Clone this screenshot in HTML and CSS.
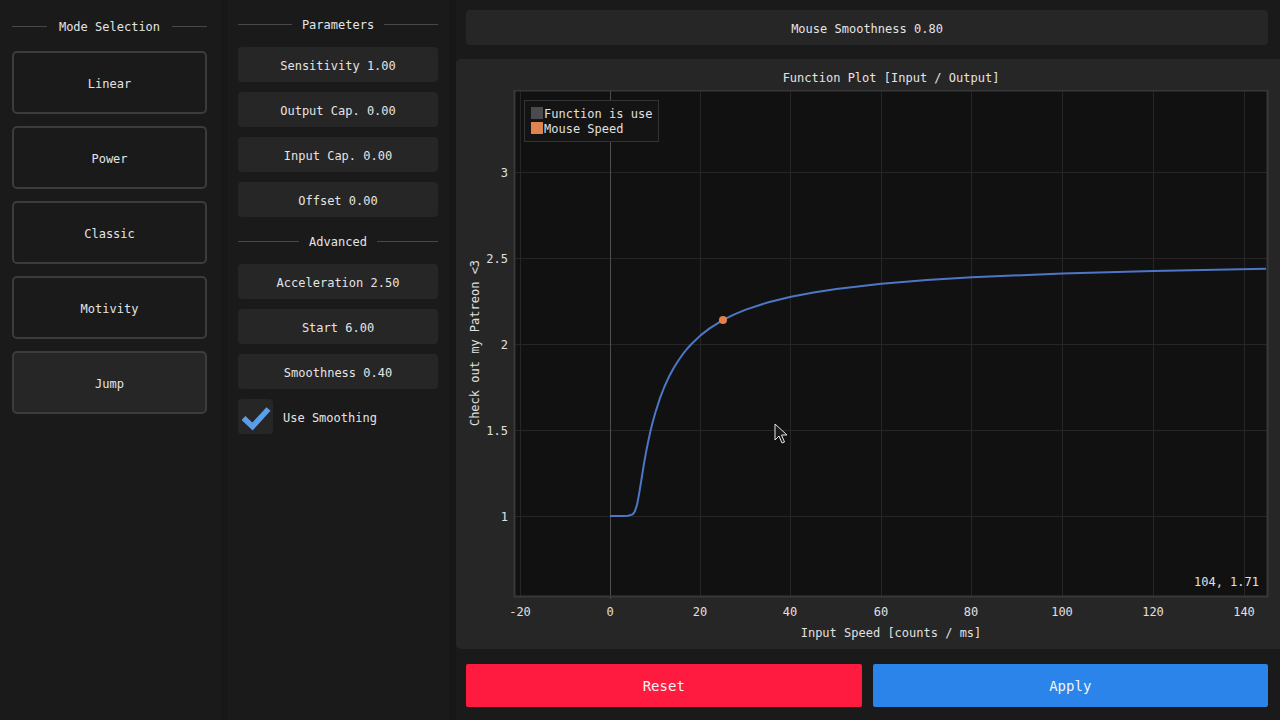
FILE: index.html
```html
<!DOCTYPE html>
<html>
<head>
<meta charset="utf-8">
<link rel="stylesheet" href="styles.css">
</head>
<body>
<div class="app">
  <div class="col-modes">
    <div class="header header-modes"><span class="rule"></span><span class="htext">Mode Selection</span><span class="rule"></span></div>
    <div class="mode-btn">Linear</div>
    <div class="mode-btn">Power</div>
    <div class="mode-btn">Classic</div>
    <div class="mode-btn">Motivity</div>
    <div class="mode-btn selected">Jump</div>
  </div>
  <div class="sep"></div>
  <div class="col-params">
    <div class="header"><span class="rule"></span><span class="htext">Parameters</span><span class="rule"></span></div>
    <div class="param-list">
      <div class="param-btn">Sensitivity 1.00</div>
      <div class="param-btn">Output Cap. 0.00</div>
      <div class="param-btn">Input Cap. 0.00</div>
      <div class="param-btn">Offset 0.00</div>
    </div>
    <div class="header header-adv"><span class="rule"></span><span class="htext">Advanced</span><span class="rule"></span></div>
    <div class="param-list">
      <div class="param-btn">Acceleration 2.50</div>
      <div class="param-btn">Start 6.00</div>
      <div class="param-btn">Smoothness 0.40</div>
      <div class="check-row">
        <div class="checkbox">
          <svg width="35" height="35" viewBox="0 0 35 35"><path d="M5.5 19 L14.5 27.5 L30.5 10" fill="none" stroke="#5a9ee9" stroke-width="5.5" stroke-linecap="butt" stroke-linejoin="miter"/></svg>
        </div>
        <span class="check-label">Use Smoothing</span>
      </div>
    </div>
  </div>
  <div class="sep sep2"></div>
  <div class="col-main">
    <div class="top-bar">Mouse Smoothness 0.80</div>
    <div class="plot-panel">
      <div class="plot-title">Function Plot [Input / Output]</div>
      <svg class="plot-svg" width="824" height="559" viewBox="456 90 824 559">
        <rect x="515" y="91" width="752" height="505" fill="#111111"/>
        <g stroke="#262626" stroke-width="1">
          <line x1="520.5" y1="91" x2="520.5" y2="599"/>
          <line x1="700.5" y1="91" x2="700.5" y2="599"/>
          <line x1="790.5" y1="91" x2="790.5" y2="599"/>
          <line x1="881.5" y1="91" x2="881.5" y2="599"/>
          <line x1="971.5" y1="91" x2="971.5" y2="599"/>
          <line x1="1062.5" y1="91" x2="1062.5" y2="599"/>
          <line x1="1153.5" y1="91" x2="1153.5" y2="599"/>
          <line x1="1244.5" y1="91" x2="1244.5" y2="599"/>
          <line x1="510" y1="172.5" x2="1267" y2="172.5"/>
          <line x1="510" y1="258.5" x2="1267" y2="258.5"/>
          <line x1="510" y1="344.5" x2="1267" y2="344.5"/>
          <line x1="510" y1="430.5" x2="1267" y2="430.5"/>
          <line x1="510" y1="516.5" x2="1267" y2="516.5"/>
        </g>
        <line x1="610.5" y1="91" x2="610.5" y2="599" stroke="#4e4e50" stroke-width="1"/>
        <rect x="514.5" y="90.5" width="753" height="506" fill="none" stroke="#383838" stroke-width="2"/>
        <g class="tick">
          <text x="520" y="616" text-anchor="middle">-20</text>
          <text x="610" y="616" text-anchor="middle">0</text>
          <text x="700" y="616" text-anchor="middle">20</text>
          <text x="790" y="616" text-anchor="middle">40</text>
          <text x="881" y="616" text-anchor="middle">60</text>
          <text x="971" y="616" text-anchor="middle">80</text>
          <text x="1062" y="616" text-anchor="middle">100</text>
          <text x="1153" y="616" text-anchor="middle">120</text>
          <text x="1244" y="616" text-anchor="middle">140</text>
          <text x="508" y="177" text-anchor="end">3</text>
          <text x="508" y="263" text-anchor="end">2.5</text>
          <text x="508" y="349" text-anchor="end">2</text>
          <text x="508" y="435" text-anchor="end">1.5</text>
          <text x="508" y="521" text-anchor="end">1</text>
          <text x="891" y="637" text-anchor="middle">Input Speed [counts / ms]</text>
          <text x="0" y="0" text-anchor="middle" transform="translate(478.5 343) rotate(-90)">Check out my Patreon &lt;3</text>
          <text x="1259" y="586" text-anchor="end">104, 1.71</text>
        </g>
        <path d="M610 516 L623.6 516 L628.1 515.8 L632.6 514.4 L634.9 511.3 L637.2 504.1 L639.4 492.1 L641.7 478 L643.9 464.1 L646.2 451.4 L648.5 440.1 L650.7 430 L653 421 L655.3 412.8 L659.8 398.7 L664.3 387 L668.8 377.1 L673.4 368.6 L677.9 361.2 L682.4 354.7 L686.9 349 L691.5 344 L700.5 335.4 L709.6 328.4 L723.1 319.9 L734.4 314.3 L745.8 309.6 L768.4 302.2 L791 296.7 L813.6 292.4 L836.3 289 L881.5 283.8 L926.8 280.1 L972 277.2 L1062.5 273.5 L1153 270.9 L1266 268.7" fill="none" stroke="#4d77c6" stroke-width="2" stroke-linejoin="round"/>
        <circle cx="723" cy="320" r="4" fill="#e2814b"/>
        <rect x="524.5" y="100.5" width="134" height="41" fill="#141414" stroke="#333333" stroke-width="1"/>
        <rect x="531" y="107" width="12" height="12" fill="#4b4b4f"/>
        <rect x="531" y="122" width="12" height="12" fill="#e0844f"/>
        <g class="tick legend">
          <text x="544" y="118">Function is use</text>
          <text x="544" y="133">Mouse Speed</text>
        </g>
        <path d="M775 424 L775 440 L779 436 L782 443 L784.5 442 L781.5 435 L787 435 Z" fill="#1a1a1a" stroke="#e6e6e6" stroke-width="1" stroke-linejoin="round"/>
      </svg>
    </div>
    <div class="actions">
      <div class="action reset">Reset</div>
      <div class="action apply">Apply</div>
    </div>
  </div>
</div>
</body>
</html>
```
FILE: styles.css
```css
* { box-sizing: border-box; }
html, body {
  margin: 0;
  padding: 0;
  background: #1a1a1b;
  width: 1280px;
  height: 720px;
  overflow: hidden;
  font-family: "DejaVu Sans Mono", "Liberation Mono", monospace;
  font-size: 12px;
  color: #e4e4e4;
}
.app {
  display: flex;
  height: 720px;
}
.col-modes {
  width: 221px;
  padding: 19px 14px 0 12px;
  display: flex;
  flex-direction: column;
  background: #1a1a1b;
}
.sep {
  width: 7px;
  background: #171718;
}
.col-params {
  width: 221px;
  padding: 17px 11px 0 10px;
  display: flex;
  flex-direction: column;
  background: #1a1a1b;
}
.header {
  display: flex;
  align-items: center;
  height: 16px;
  gap: 10px;
  margin-bottom: 14px;
}
.header-modes {
  gap: 12px;
  margin-bottom: 16px;
}
.header-adv { margin-top: 17px; }
.rule {
  flex: 1;
  height: 1px;
  background: #48484c;
  position: relative;
  top: -1px;
}
.htext {
  line-height: 16px;
  white-space: nowrap;
}
.mode-btn {
  height: 63px;
  border: 2px solid #3c3c3f;
  border-radius: 5px;
  display: flex;
  align-items: center;
  justify-content: center;
  padding-top: 2px;
  margin-bottom: 12px;
}
.mode-btn.selected { background: #262627; }
.param-list {
  display: flex;
  flex-direction: column;
  gap: 10px;
}
.param-btn {
  height: 35px;
  background: #262627;
  border-radius: 4px;
  display: flex;
  align-items: center;
  justify-content: center;
  padding-top: 2px;
}
.check-row {
  display: flex;
  align-items: center;
  gap: 10px;
  height: 35px;
}
.check-label { padding-top: 2px; }
.checkbox {
  width: 35px;
  height: 35px;
  background: #262627;
  border-radius: 4px;
}
.checkbox svg { display: block; }
.col-main {
  flex: 1;
  padding-top: 10px;
  display: flex;
  flex-direction: column;
}
.top-bar {
  height: 35px;
  margin: 0 12px 0 10px;
  background: #262627;
  border-radius: 4px;
  display: flex;
  align-items: center;
  justify-content: center;
  padding-top: 2px;
}
.plot-panel {
  margin-top: 14px;
  height: 590px;
  background: #262627;
  border-radius: 5px 0 0 5px;
  display: flex;
  flex-direction: column;
}
.plot-title {
  height: 31px;
  padding: 11px 12px 0 58px;
  line-height: 16px;
  text-align: center;
}
.plot-svg { display: block; }
.tick {
  font-family: "DejaVu Sans Mono", "Liberation Mono", monospace;
  font-size: 12px;
  fill: #e0e0e0;
}
.actions {
  margin: 15px 12px 0 10px;
  display: flex;
  gap: 11px;
  height: 43px;
}
.action {
  flex: 1;
  display: flex;
  align-items: center;
  justify-content: center;
  font-size: 14px;
  color: #f4f4f4;
  border-radius: 2px;
  padding-top: 1px;
}
.reset { background: #ff1a40; }
.apply { background: #2a84ea; }
```
